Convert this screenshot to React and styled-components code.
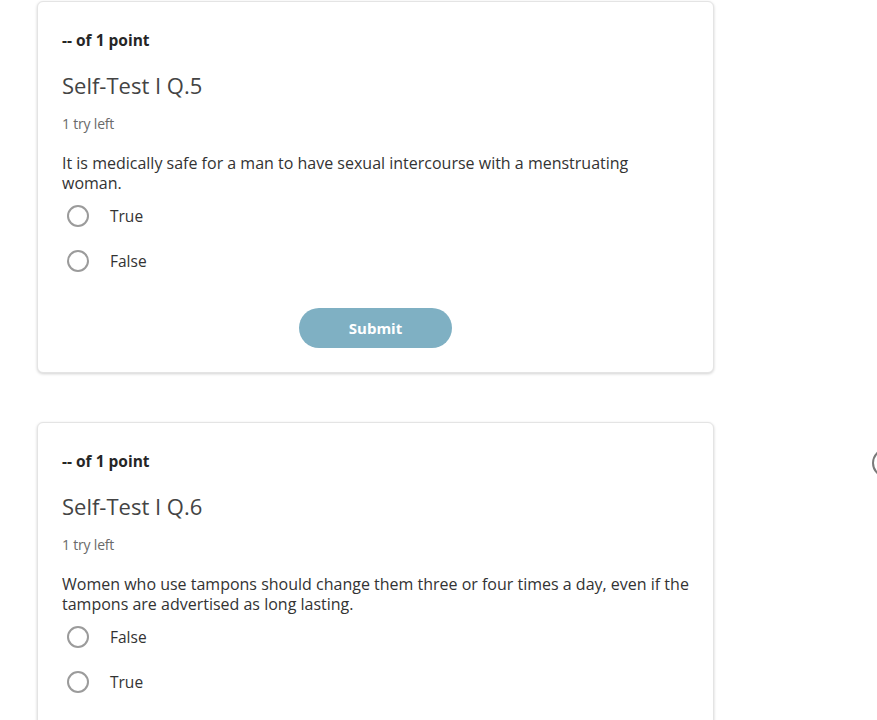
import React from "react";
import styled, { createGlobalStyle } from "styled-components";

const Global = createGlobalStyle`
  html, body { margin: 0; padding: 0; background: #ffffff; }
  body { font-family: "Open Sans", "Noto Sans", sans-serif; color: #333; overflow: hidden; }
`;

const Page = styled.div`
  position: relative;
  width: 877px;
  height: 720px;
  overflow: hidden;
  padding: 1px 0 0 37px;
  box-sizing: border-box;
`;

const Column = styled.div`
  display: flex;
  flex-direction: column;
  gap: 49px;
  width: 677px;
`;

const Card = styled.section`
  box-sizing: border-box;
  width: 677px;
  background: #fff;
  border: 1px solid #e4e4e4;
  border-radius: 6px;
  box-shadow: 0 1px 3px rgba(0, 0, 0, 0.18);
  padding: 28px 20px 24px 24px;
  display: flex;
  flex-direction: column;
`;

const Points = styled.div`
  font-size: 15.5px;
  font-weight: 700;
  line-height: 20px;
  color: #262626;
`;

const Title = styled.h2`
  margin: 21px 0 0 0;
  font-size: 22px;
  font-weight: 400;
  line-height: 28px;
  color: #444;
`;

const Tries = styled.div`
  margin-top: 17px;
  font-size: 14px;
  line-height: 16px;
  color: #6a6a6a;
  letter-spacing: -0.2px;
`;

const Question = styled.p`
  margin: 21px 0 0 0;
  max-width: 628px;
  font-size: 16px;
  line-height: 20px;
  color: #333;
`;

const Options = styled.div`
  display: flex;
  flex-direction: column;
`;

const Option = styled.label`
  display: flex;
  align-items: center;
  height: 45px;
  font-size: 15.5px;
  color: #333;
`;

const Radio = styled.span`
  box-sizing: border-box;
  width: 22px;
  height: 22px;
  margin-left: 5px;
  margin-right: 21px;
  border-radius: 50%;
  border: 2px solid #9b9b9b;
  flex: none;
`;

const Actions = styled.div`
  display: flex;
  justify-content: center;
  margin-top: 25px;
  margin-right: 4px;
`;

const Submit = styled.button`
  width: 153px;
  height: 40px;
  border: none;
  border-radius: 20px;
  background: #7fb0c3;
  color: #fff;
  font-family: "Open Sans", "Noto Sans", sans-serif;
  font-weight: 700;
  font-size: 15px;
`;

const SideButton = styled.div`
  position: absolute;
  left: 872px;
  top: 448px;
  width: 30px;
  height: 30px;
  box-sizing: border-box;
  border: 2px solid #7a7a7a;
  border-radius: 50%;
`;

const questions = [
  {
    title: "Self-Test I Q.5",
    text: "It is medically safe for a man to have sexual intercourse with a menstruating woman.",
    options: ["True", "False"],
  },
  {
    title: "Self-Test I Q.6",
    text: "Women who use tampons should change them three or four times a day, even if the tampons are advertised as long lasting.",
    options: ["False", "True"],
  },
];

export default function App() {
  return (
    <>
      <Global />
      <Page>
        <Column>
          {questions.map((q) => (
            <Card key={q.title}>
              <Points>-- of 1 point</Points>
              <Title>{q.title}</Title>
              <Tries>1 try left</Tries>
              <Question>{q.text}</Question>
              <Options>
                {q.options.map((o) => (
                  <Option key={o}>
                    <Radio />
                    {o}
                  </Option>
                ))}
              </Options>
              <Actions>
                <Submit>Submit</Submit>
              </Actions>
            </Card>
          ))}
        </Column>
        <SideButton />
      </Page>
    </>
  );
}
